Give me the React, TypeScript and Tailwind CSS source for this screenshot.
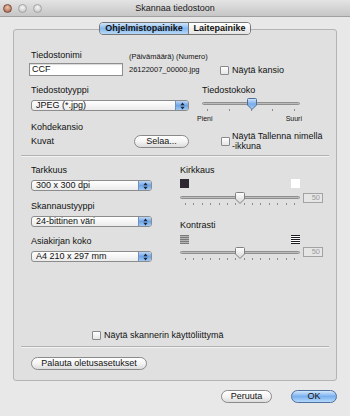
import React from "react";

const Checkbox = () => (
  <span className="block h-[9px] w-[9px] shrink-0 rounded-[1px] border border-[#8a8a8a] bg-gradient-to-b from-white to-[#e6e6e6]" />
);

const Arrows = () => (
  <svg width="5" height="8" viewBox="0 0 5 8">
    <path d="M2.5 0.5L4.6 3.2H0.4Z M2.5 7.5L4.6 4.8H0.4Z" fill="#1d2735" />
  </svg>
);

const Popup = ({ label, className }: { label: string; className: string }) => (
  <div
    className={`flex h-[11px] overflow-hidden rounded-[3px] border border-[#8c8c8c] bg-gradient-to-b from-white to-[#ebebeb] ${className}`}
  >
    <span className="flex-1 truncate pl-[4px] text-[9px] leading-[9px]">{label}</span>
    <span className="flex w-[13px] items-center justify-center border-l border-[#6f8fbe] bg-gradient-to-b from-[#bcd7f6] via-[#6fa5e6] to-[#9fc8f4]">
      <Arrows />
    </span>
  </div>
);

const Button = ({ label, className, primary }: { label: string; className: string; primary?: boolean }) => (
  <div
    className={`flex h-[13px] items-center justify-center rounded-full border text-[9px] leading-[9px] ${
      primary
        ? "border-[#4f6f9f] bg-gradient-to-b from-[#d2e6fb] via-[#7ab0ee] to-[#b4d8fa]"
        : "border-[#8a8a8a] bg-gradient-to-b from-white via-[#f4f4f4] to-[#dcdcdc]"
    } ${className}`}
  >
    {label}
  </div>
);

const Thumb = ({ blue }: { blue?: boolean }) => (
  <svg width="10" height="12" viewBox="0 0 10 12">
    <defs>
      <linearGradient id="tb" x1="0" y1="0" x2="0" y2="1">
        <stop offset="0" stopColor="#d4e8fc" />
        <stop offset="0.5" stopColor="#78acea" />
        <stop offset="1" stopColor="#a8d0f7" />
      </linearGradient>
      <linearGradient id="tg" x1="0" y1="0" x2="0" y2="1">
        <stop offset="0" stopColor="#ffffff" />
        <stop offset="1" stopColor="#d6d6d6" />
      </linearGradient>
    </defs>
    <path
      d="M1.5 0.5H8.5A1 1 0 0 1 9.5 1.5V7L5 11.5L0.5 7V1.5A1 1 0 0 1 1.5 0.5Z"
      fill={blue ? "url(#tb)" : "url(#tg)"}
      stroke={blue ? "#4c6f9c" : "#808080"}
    />
  </svg>
);

const Slider = ({
  className,
  thumb,
  ticks,
  blue,
}: {
  className: string;
  thumb: string;
  ticks: number;
  blue?: boolean;
}) => (
  <div className={className}>
    <div className="relative h-[11px]">
      <div className="absolute left-0 right-0 top-[4px] h-[3px] rounded-full border border-[#8f8f8f] bg-gradient-to-b from-[#a8a8a8] to-[#d0d0d0]" />
      <div className={`absolute top-0 ${thumb}`}>
        <Thumb blue={blue} />
      </div>
    </div>
    <div className="flex justify-between px-[5px]">
      {Array.from({ length: ticks }).map((_, i) => (
        <span key={i} className="block h-[2px] w-px bg-[#8c8c8c]" />
      ))}
    </div>
  </div>
);

const ValueBox = ({ className }: { className: string }) => (
  <div
    className={`h-[10px] w-[20px] border border-[#a2a2a2] bg-[#e6e6e6] pr-[2px] text-right text-[7.5px] leading-[8px] text-[#9a9a9a] ${className}`}
  >
    50
  </div>
);

const Separator = ({ className }: { className: string }) => (
  <div className={`mx-[7px] h-[2px] border-t border-b border-t-[#b2b2b2] border-b-[#f2f2f2] ${className}`} />
);

const Stripes = ({ dark }: { dark?: boolean }) => (
  <div
    className={`flex h-[9px] w-[9px] flex-col justify-between ${dark ? "bg-white" : "bg-[#b4b4b4]"}`}
  >
    {Array.from({ length: 5 }).map((_, i) => (
      <span key={i} className={`block h-px ${dark ? "bg-[#1e1e24]" : "bg-[#7a7a7a]"}`} />
    ))}
  </div>
);

export default function App() {
  return (
    <div className="flex h-[416px] w-[350px] flex-col bg-[#e8e8e8] font-['Liberation_Sans',Arial,sans-serif] text-[#111]">
      {/* title bar */}
      <div className="grid h-[17px] grid-cols-[1fr_auto_1fr] items-center border-b border-[#a0a0a0] bg-gradient-to-b from-[#e4e4e4] to-[#c6c6c6]">
        <div className="flex items-center gap-[6px] pl-[3px]">
          <span className="block h-[9px] w-[9px] rounded-full border border-[#7d4c3c] bg-[radial-gradient(circle_at_50%_35%,#f0c4a8,#9a5c46)]" />
          <span className="block h-[9px] w-[9px] rounded-full border border-[#a4a4a4] bg-[radial-gradient(circle_at_50%_35%,#f6f6f6,#bdbdbd)]" />
          <span className="block h-[9px] w-[9px] rounded-full border border-[#a4a4a4] bg-[radial-gradient(circle_at_50%_35%,#f6f6f6,#bdbdbd)]" />
        </div>
        <div className="text-[9px] leading-[9px] text-[#1a1a1a]">Skannaa tiedostoon</div>
        <div />
      </div>

      {/* tabs */}
      <div className="relative z-10 mx-auto mt-[5px] flex h-[13px] w-[152px] overflow-hidden rounded-[4px] border border-[#777] text-[9px] font-bold leading-[11px]">
        <div className="flex w-[88px] items-center justify-center bg-gradient-to-b from-[#d0e5fb] via-[#86b8ee] to-[#b6d8f8]">
          Ohjelmistopainike
        </div>
        <div className="flex flex-1 items-center justify-center border-l border-[#777] bg-gradient-to-b from-white to-[#e4e4e4]">
          Laitepainike
        </div>
      </div>

      {/* group box */}
      <div className="ml-[13px] mt-[-6px] flex h-[352px] w-[324px] flex-col rounded-[3px] border border-[#b4b4b4] bg-[#e0e0e0]">
        <div className="mt-[20px] flex pl-[15px]">
          <div className="w-[94px]">
            <div className="pl-[2px] text-[9px] leading-[11px]">Tiedostonimi</div>
            <div className="mt-[2px] h-[13px] border border-[#8e8e8e] bg-white pl-[2px] text-[9px] leading-[11px] shadow-[inset_0_1px_1px_rgba(0,0,0,0.15)]">
              CCF
            </div>
          </div>
          <div className="ml-[6px] w-[91px] text-[7.5px] leading-[9px]">
            <div className="mt-[2px]">(Päivämäärä) (Numero)</div>
            <div className="mt-[4px]">26122007_00000.jpg</div>
          </div>
          <div className="mt-[16px] flex h-[9px] items-center gap-[3px] text-[9px] leading-[9px]">
            <Checkbox />
            Näytä kansio
          </div>
        </div>

        <div className="mt-[9px] flex pl-[17px]">
          <div className="w-[158px]">
            <div className="text-[9px] leading-[11px]">Tiedostotyyppi</div>
            <Popup label="JPEG (*.jpg)" className="mt-[4px] w-full" />
            <div className="mt-[11px] text-[9px] leading-[11px]">Kohdekansio</div>
            <div className="mt-[2px] flex h-[13px] items-center justify-between text-[9px]">
              <span>Kuvat</span>
              <Button label="Selaa..." className="w-[55px]" />
            </div>
          </div>
          <div className="ml-[13px] w-[128px]">
            <div className="text-[9px] leading-[11px]">Tiedostokoko</div>
            <Slider className="mt-[2px] w-[98px]" thumb="left-[45px]" ticks={5} blue />
            <div className="-ml-[5px] mt-[3px] flex w-[105px] justify-between text-[7px] leading-[9px]">
              <span>Pieni</span>
              <span>Suuri</span>
            </div>
            <div className="ml-[19px] mt-[8px] flex items-center gap-[2px] text-[9px] leading-[10px]">
              <Checkbox />
              <span>
                Näytä Tallenna nimellä
                <br />
                -ikkuna
              </span>
            </div>
          </div>
        </div>

        <Separator className="mt-[4px]" />

        <div className="flex pl-[17px]">
          <div className="w-[121px] text-[9px] leading-[11px]">
            <div className="mt-[8px]">Tarkkuus</div>
            <Popup label="300 x 300 dpi" className="mt-[4px] w-full" />
            <div className="mt-[10px]">Skannaustyyppi</div>
            <Popup label="24-bittinen väri" className="mt-[4px] w-full" />
            <div className="mt-[9px]">Asiakirjan koko</div>
            <Popup label="A4  210 x 297 mm" className="mt-[4px] w-full" />
          </div>
          <div className="ml-[28px] w-[143px] text-[9px] leading-[11px]">
            <div className="mt-[8px]">Kirkkaus</div>
            <div className="mt-[3px] flex w-[120px] justify-between">
              <span className="block h-[9px] w-[9px] bg-[#2e2833]" />
              <span className="block h-[9px] w-[9px] bg-white" />
            </div>
            <div className="mt-[4px] flex items-start">
              <Slider className="w-[120px]" thumb="left-[55px]" ticks={14} />
              <ValueBox className="ml-[3px] mt-[1px]" />
            </div>
            <div className="mt-[15px]">Kontrasti</div>
            <div className="mt-[4px] flex w-[120px] justify-between">
              <Stripes />
              <Stripes dark />
            </div>
            <div className="mt-[3px] flex items-start">
              <Slider className="w-[120px]" thumb="left-[55px]" ticks={14} />
              <ValueBox className="ml-[3px]" />
            </div>
          </div>
        </div>

        <div className="flex-1" />

        <div className="flex h-[10px] items-center gap-[3px] pl-[78px] text-[9px] leading-[10px]">
          <Checkbox />
          Näytä skannerin käyttöliittymä
        </div>
        <Separator className="mt-[6px]" />
        <Button label="Palauta oletusasetukset" className="mb-[10px] ml-[17px] mt-[9px] w-[116px]" />
      </div>

      <div className="mt-[9px] flex justify-end gap-[19px] pr-[13px]">
        <Button label="Peruuta" className="w-[51px]" />
        <Button label="OK" className="w-[46px]" primary />
      </div>
    </div>
  );
}
